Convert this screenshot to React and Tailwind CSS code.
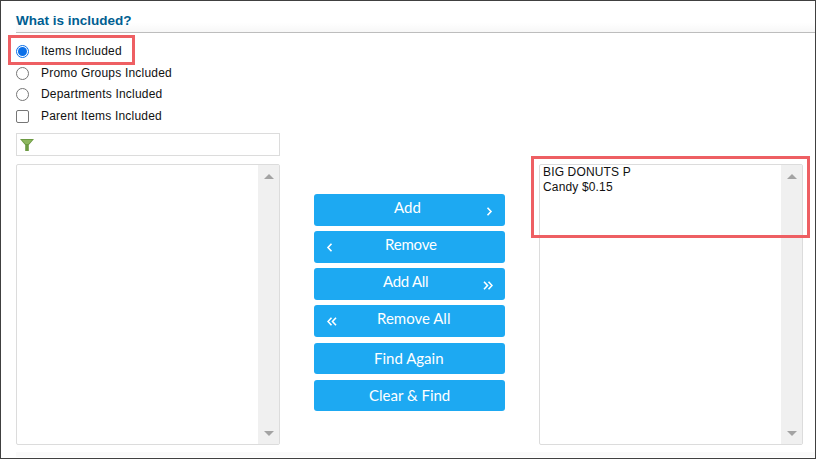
const Chevron = ({ double, left }) => (
  <svg width={double ? 10 : 7} height="9" viewBox={double ? "0 0 10 9" : "0 0 7 9"} className="block" fill="none" stroke="white" strokeWidth="1.6">
    <g transform={left ? `translate(${double ? 10 : 7},0) scale(-1,1)` : undefined}>
      {double ? (
        <>
          <path d="M1 .8 4.5 4.5 1 8.2" />
          <path d="M5.5 .8 9 4.5 5.5 8.2" />
        </>
      ) : (
        <path d="M1.5 .8 5 4.5 1.5 8.2" />
      )}
    </g>
  </svg>
);

const Btn = ({ label, h = "h-8", icon, iconPos, textPos, extra = "" }) => (
  <div className={`relative ${h} w-[191px] rounded-[3px] bg-[#1da9f2] text-white text-[15px] leading-none font-['Lato',sans-serif]`}>
    <span className={`absolute whitespace-nowrap ${textPos} ${extra}`}>{label}</span>
    {icon && <span className={`absolute ${iconPos}`}>{icon}</span>}
  </div>
);

const Track = () => (
  <div className="flex h-full w-[21px] flex-col items-center justify-between bg-[#f0f0f0] pt-[9px] pb-[8px]">
    <div className="h-0 w-0 border-x-[5px] border-b-[5px] border-x-transparent border-b-[#a3a3a3]" />
    <div className="h-0 w-0 border-x-[5px] border-t-[5px] border-x-transparent border-t-[#a3a3a3]" />
  </div>
);

const Option = ({ type = "radio", checked, label, mb }) => (
  <div className={`flex h-[14px] items-center ${mb}`}>
    {type === "radio" ? (
      <span className={`flex h-[13px] w-[13px] items-center justify-center rounded-full border bg-white ${checked ? "border-[#0a6fe8]" : "border-[#767676]"}`}>
        {checked && <span className="h-[9px] w-[9px] rounded-full bg-[#0a6fe8]" />}
      </span>
    ) : (
      <span className="h-[13px] w-[13px] rounded-[2px] border border-[#767676] bg-white" />
    )}
    <span className="ml-[12px] text-[12px] leading-none tracking-[0.2px] text-[#111]">{label}</span>
  </div>
);

const List = ({ children }) => (
  <div className="flex h-[281px] w-[264px] rounded-[2px] border border-[#dcdcdc] bg-white">
    <div className="flex-1 px-[3px] text-[12px] leading-[15px] tracking-[0.15px] text-[#111]">{children}</div>
    <Track />
  </div>
);

export default function App() {
  return (
    <div className="relative h-[459px] w-[816px] overflow-hidden bg-[#404040] p-[1px] font-['Liberation_Sans',Arial,sans-serif]">
      <div className="h-[457px] w-[814px] bg-white pl-[15px]">
        <div className="h-[32px] border-b border-[#bdbdbd] bg-gradient-to-b from-white from-70% to-[#f7f7f7] pt-[12px] text-[13.5px] font-bold leading-[16px] text-[#005e91]">
          What is included?
        </div>

        <div className="mt-[11px] flex w-[799px] flex-col">
          <Option checked label="Items Included" mb="mb-[8px]" />
          <Option label="Promo Groups Included" mb="mb-[7px]" />
          <Option label="Departments Included" mb="mb-[8px]" />
          <Option type="checkbox" label="Parent Items Included" mb="mb-[10px]" />
        </div>

        <div className="flex h-[23px] w-[264px] items-center border border-[#dcdcdc] pl-[3px]">
          <svg width="14" height="12" viewBox="0 0 14 12" className="block">
            <path d="M0 0H14L8.8 6V12H5.2V6Z" fill="#6c9a42" />
            <path d="M2 1H12L8.5 5H5.5Z" fill="#8db75f" />
          </svg>
        </div>

        <div className="mt-[8px] flex w-[787px] items-start">
          <List />
          <div className="ml-[34px] mt-[30px] flex flex-col">
            <div className="flex flex-col gap-[5px]">
              <Btn label="Add" textPos="left-[80px] top-[6px]" icon={<Chevron />} iconPos="right-[12px] top-[13px]" />
              <Btn label="Remove" textPos="left-[71px] top-[6px]" extra="tracking-[-0.2px]" icon={<Chevron left />} iconPos="left-[12px] top-[12px]" />
              <Btn label="Add All" textPos="left-[69px] top-[6px]" extra="tracking-[-0.3px]" icon={<Chevron double />} iconPos="right-[12px] top-[13px]" />
              <Btn label="Remove All" textPos="left-[63px] top-[6px]" icon={<Chevron double left />} iconPos="left-[13px] top-[12px]" />
            </div>
            <div className="mt-[6px] flex flex-col gap-[6px]">
              <Btn h="h-[31px]" label="Find Again" textPos="left-[60px] top-[8px]" />
              <Btn h="h-[31px]" label="Clear & Find" textPos="left-[55px] top-[8px]" />
            </div>
          </div>
          <div className="ml-[34px]">
            <List>
              <div>BIG DONUTS P</div>
              <div>Candy $0.15</div>
            </List>
          </div>
        </div>

        <div className="mt-[7px] h-[5px] w-[799px] bg-[#fafafa]" />
      </div>

      <div className="absolute left-[8px] top-[35px] h-[30px] w-[127px] border-[3px] border-[#ee5f63]" />
      <div className="absolute left-[531px] top-[156px] h-[82px] w-[279px] border-[3px] border-[#ee5f63]" />
    </div>
  );
}
